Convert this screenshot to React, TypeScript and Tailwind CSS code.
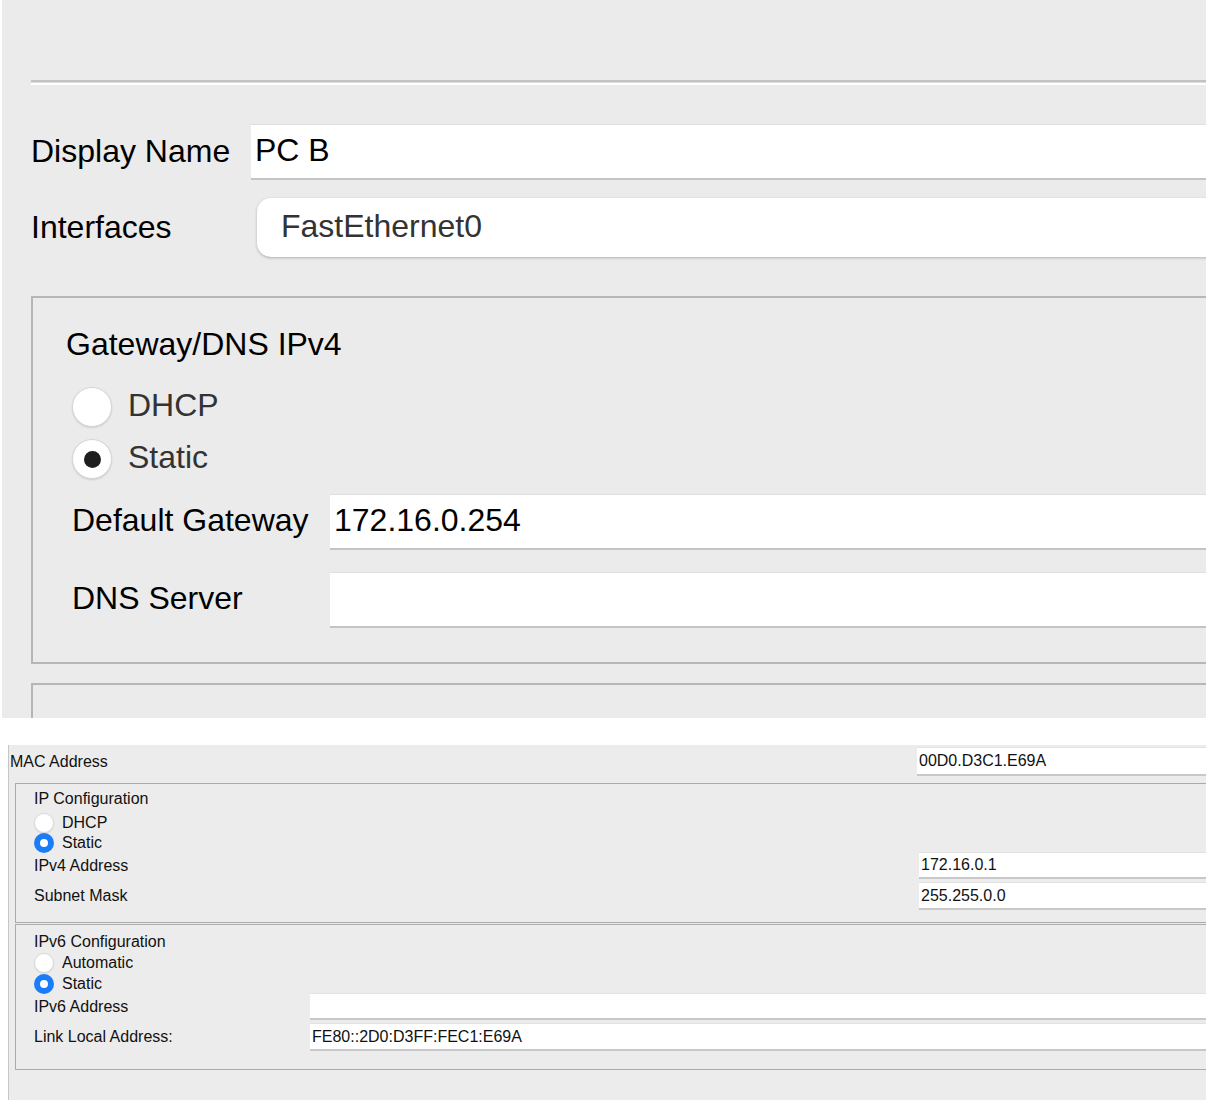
import React from "react";

const font = { fontFamily: '"Liberation Sans", Arial, Helvetica, sans-serif' };

function BigRadio({ checked }: { checked?: boolean }) {
  return (
    <div className="w-[40px] h-[40px] rounded-full bg-white border border-[#d6d6d6] shadow-[0_1px_2px_rgba(0,0,0,0.12)] flex items-center justify-center shrink-0">
      {checked && <div className="w-[17px] h-[17px] rounded-full bg-[#1e1e1e]" />}
    </div>
  );
}

function SmallRadio({ checked }: { checked?: boolean }) {
  if (checked) {
    return (
      <div className="w-[20px] h-[20px] rounded-full bg-[#1a7cf6] flex items-center justify-center shrink-0">
        <div className="w-[8px] h-[8px] rounded-full bg-white" />
      </div>
    );
  }
  return (
    <div className="w-[20px] h-[20px] rounded-full bg-white border border-[#d9d9d9] shadow-[0_1px_1px_rgba(0,0,0,0.08)] shrink-0" />
  );
}

function BigInput({ value }: { value: string }) {
  return (
    <div className="flex-1 h-full bg-white border-t border-t-[#dedede] border-b-2 border-b-[#c4c4c4] flex items-center pl-[4px] text-[32px] text-black leading-[32px]">
      <span className="pb-[3px]">{value}</span>
    </div>
  );
}

function SmallInput({ value }: { value?: string }) {
  return (
    <div className="flex-1 h-full bg-white border-t border-t-[#e2e2e2] border-b-2 border-b-[#c8c8c8] flex items-center pl-[2px] text-[16px] text-[#111] leading-[20px]">
      {value}
    </div>
  );
}

export default function App() {
  return (
    <div className="w-[1210px] h-[1100px] bg-white overflow-hidden" style={font}>
      {/* Top zoomed section */}
      <div className="ml-[2px] w-[1204px] h-[718px] bg-[#ebebeb] overflow-hidden pl-[29px] pt-[80px]">
        <div className="w-[1240px]">
          <div className="h-[2px] bg-[#c2c2c2]" />
          <div className="h-[1px] bg-[#dcdcdc]" />
          <div className="h-[2px] bg-white" />

          <div className="mt-[39px] h-[56px] flex items-center">
            <div className="w-[220px] text-[32px] leading-[32px] text-black pb-[2px]">Display Name</div>
            <BigInput value="PC B" />
          </div>

          <div className="mt-[18px] h-[59px] flex items-center">
            <div className="w-[226px] text-[32px] leading-[32px] text-black pb-[2px]">Interfaces</div>
            <div className="flex-1 h-full bg-white rounded-[14px] shadow-[0_1px_3px_rgba(0,0,0,0.25)] flex items-center pl-[24px] text-[32px] leading-[32px] text-[#333]">
              <span className="pb-[3px]">FastEthernet0</span>
            </div>
          </div>

          <div className="mt-[39px] h-[368px] border-2 border-[#b6b6b6] pt-[30px]">
            <div className="pl-[33px] text-[32px] leading-[32px] text-black">Gateway/DNS IPv4</div>
            <div className="mt-[27px] h-[40px] pl-[39px] flex items-center gap-[16px]">
              <BigRadio />
              <span className="text-[32px] leading-[32px] text-[#333] pb-[4px]">DHCP</span>
            </div>
            <div className="mt-[12px] h-[40px] pl-[39px] flex items-center gap-[16px]">
              <BigRadio checked />
              <span className="text-[32px] leading-[32px] text-[#333] pb-[4px]">Static</span>
            </div>
            <div className="mt-[15px] h-[56px] pl-[39px] flex items-center">
              <div className="w-[258px] text-[32px] leading-[32px] text-black pb-[5px]">Default Gateway</div>
              <BigInput value="172.16.0.254" />
            </div>
            <div className="mt-[22px] h-[56px] pl-[39px] flex items-center">
              <div className="w-[258px] text-[32px] leading-[32px] text-black pb-[5px]">DNS Server</div>
              <BigInput value="" />
            </div>
          </div>

          <div className="mt-[19px] h-[100px] border-2 border-[#b6b6b6]" />
        </div>
      </div>

      {/* Bottom section */}
      <div className="mt-[27px] ml-[8px] w-[1198px] h-[355px] bg-[#ececec] border-l border-l-[#c6c6c6] overflow-hidden pt-[2px]">
        <div className="w-[1240px] text-[16px] leading-[20px] text-[#111]">
          <div className="h-[29px] flex items-center">
            <div className="w-[908px] pl-[1px]">MAC Address</div>
            <SmallInput value="00D0.D3C1.E69A" />
          </div>

          <div className="mt-[7px] ml-[6px] h-[140px] border border-[#ababab] pt-[5px]">
            <div className="pl-[18px]">IP Configuration</div>
            <div className="mt-[4px] h-[20px] pl-[18px] flex items-center gap-[8px]">
              <SmallRadio />
              <span>DHCP</span>
            </div>
            <div className="h-[20px] pl-[18px] flex items-center gap-[8px]">
              <SmallRadio checked />
              <span>Static</span>
            </div>
            <div className="-mt-[1px] h-[27px] flex items-center">
              <div className="w-[903px] pl-[18px]">IPv4 Address</div>
              <SmallInput value="172.16.0.1" />
            </div>
            <div className="mt-[3px] h-[28px] flex items-center">
              <div className="w-[903px] pl-[18px]">Subnet Mask</div>
              <SmallInput value="255.255.0.0" />
            </div>
          </div>

          <div className="mt-[1px] ml-[6px] h-[146px] border border-[#ababab] pt-[7px]">
            <div className="pl-[18px]">IPv6 Configuration</div>
            <div className="mt-[1px] h-[20px] pl-[18px] flex items-center gap-[8px]">
              <SmallRadio />
              <span>Automatic</span>
            </div>
            <div className="mt-[1px] h-[20px] pl-[18px] flex items-center gap-[8px]">
              <SmallRadio checked />
              <span>Static</span>
            </div>
            <div className="-mt-[1px] h-[27px] flex items-center">
              <div className="w-[294px] pl-[18px]">IPv6 Address</div>
              <SmallInput />
            </div>
            <div className="mt-[3px] h-[28px] flex items-center">
              <div className="w-[294px] pl-[18px]">Link Local Address:</div>
              <SmallInput value="FE80::2D0:D3FF:FEC1:E69A" />
            </div>
          </div>
        </div>
      </div>
    </div>
  );
}
